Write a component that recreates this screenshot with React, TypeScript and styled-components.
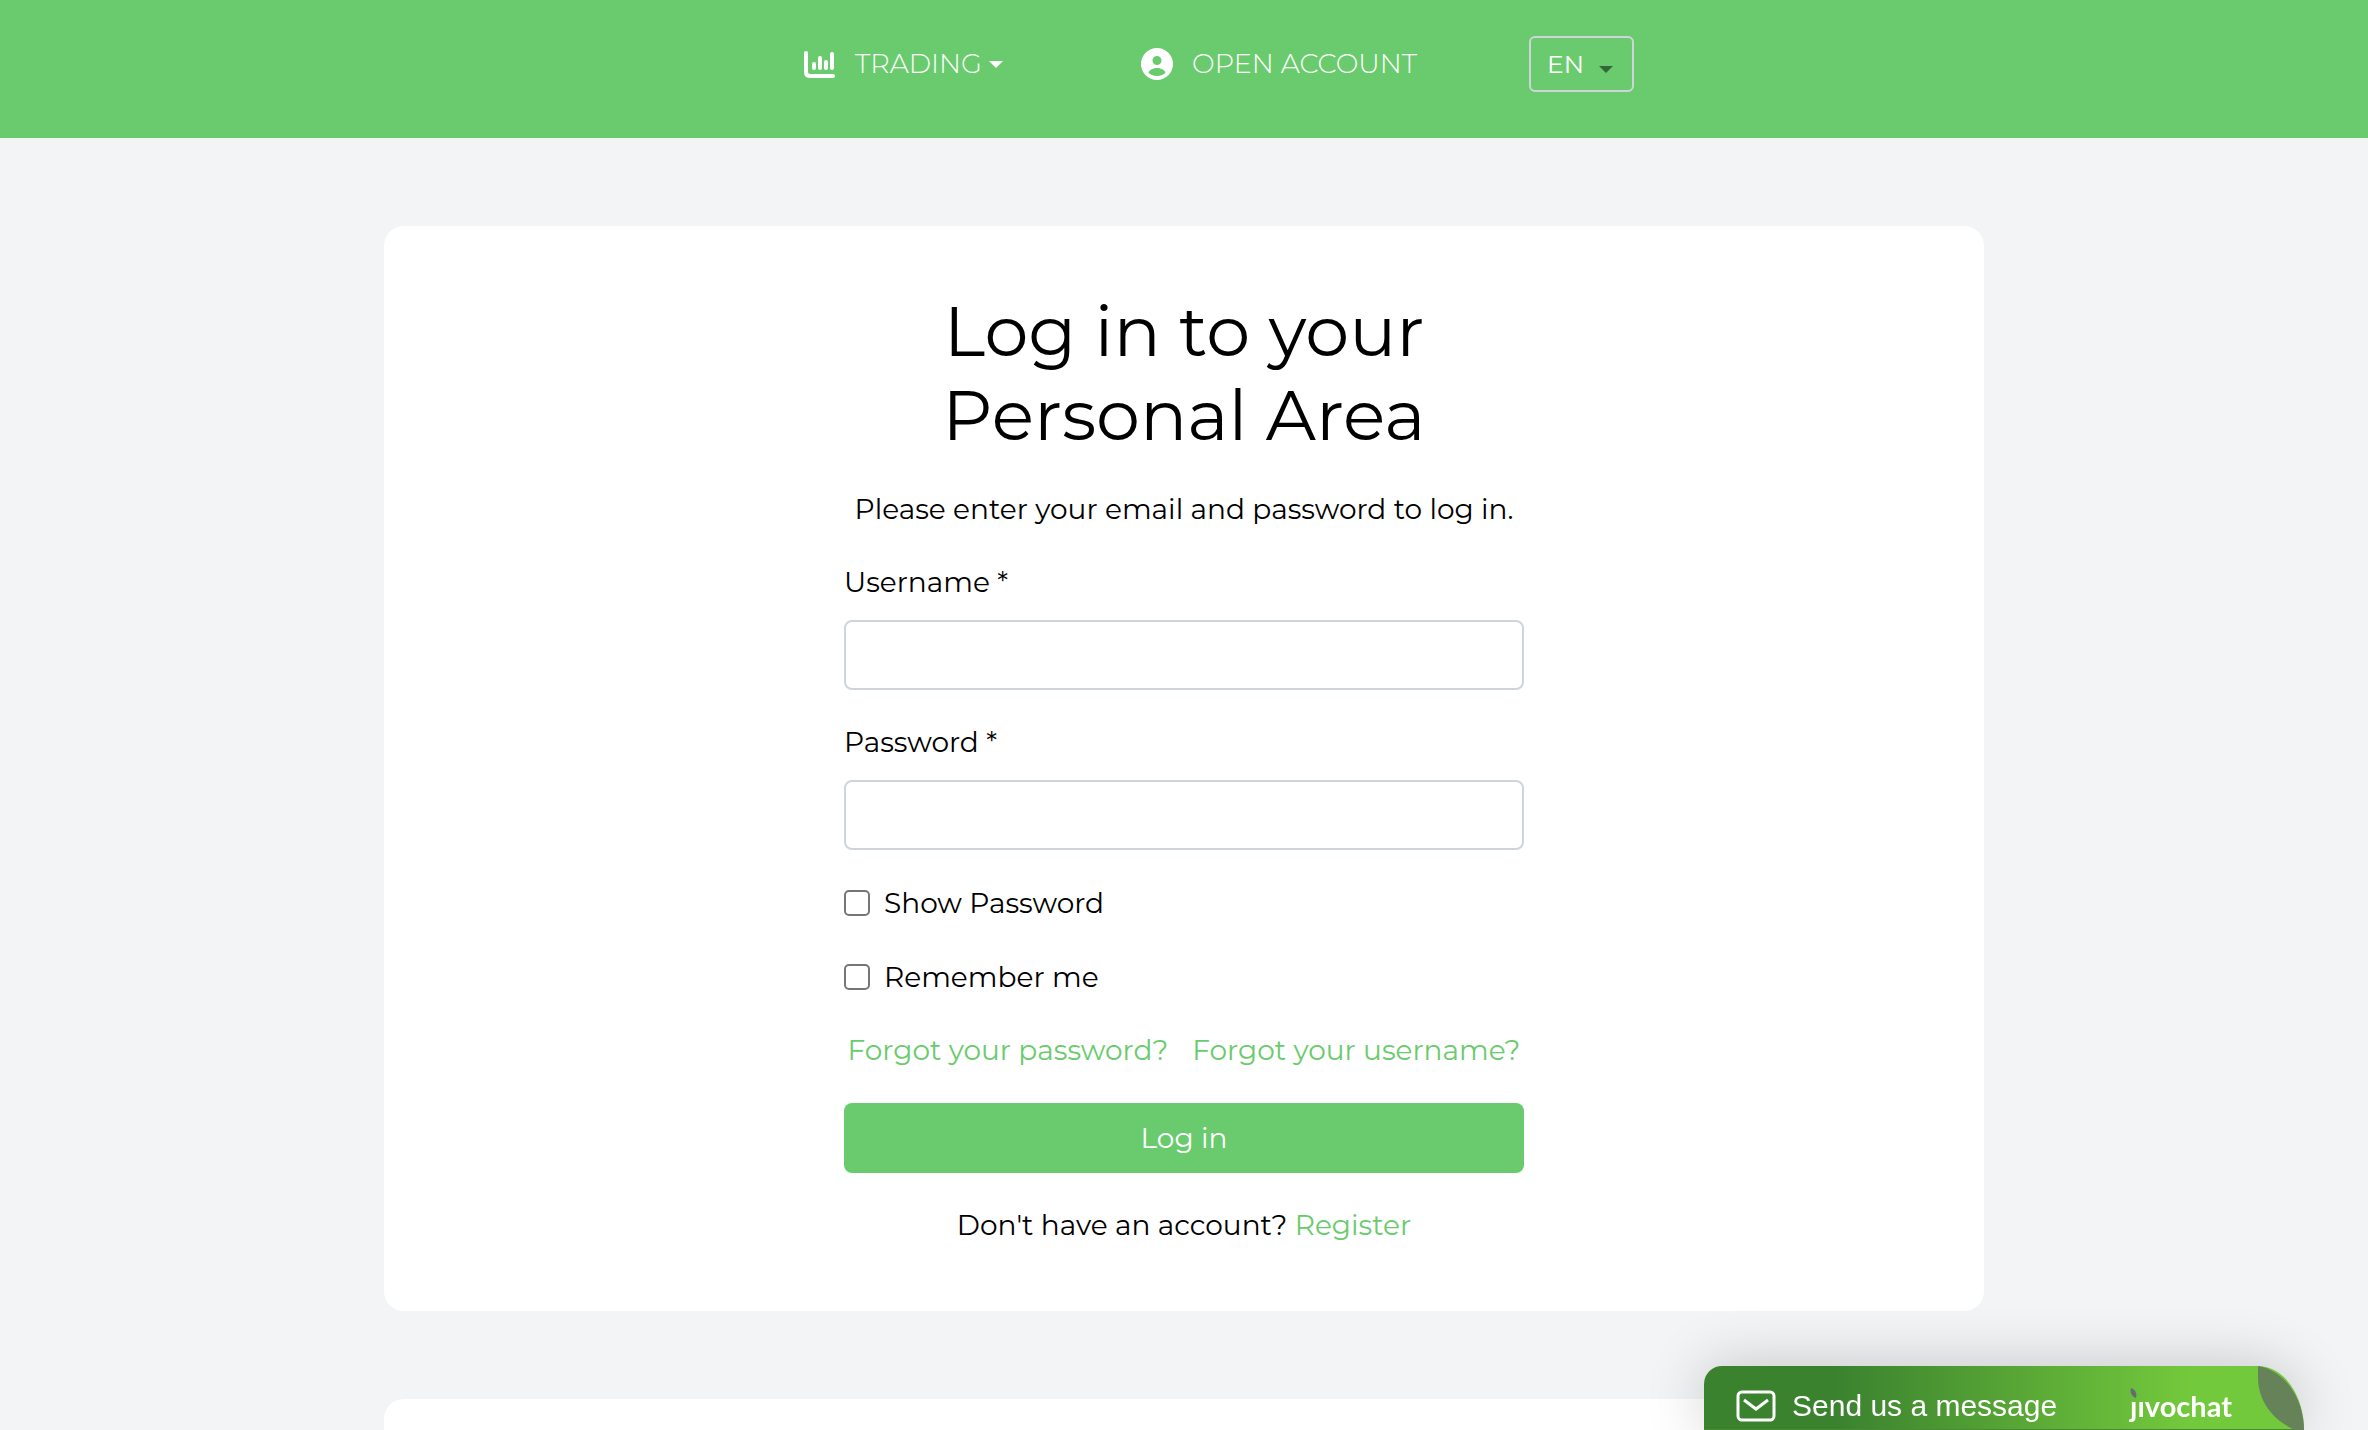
import React, { useState } from "react";
import styled, { createGlobalStyle } from "styled-components";

const green = "#6acb6e";
const sans = 'Montserrat, Inter, "Open Sans", sans-serif';

const GlobalStyle = createGlobalStyle`
  *, *::before, *::after { box-sizing: border-box; }
  body {
    margin: 0;
    background: #f3f4f6;
    color: #000;
    font: 400 28px/42px ${sans};
  }
`;

const Page = styled.div`
  min-height: 100vh;
  display: flex;
  flex-direction: column;
`;

const Header = styled.header`
  display: flex;
  justify-content: center;
  background: ${green};
  padding: 36px 32px 46px;
`;

const Nav = styled.nav`
  display: grid;
  grid-template-columns: 337px 388px 105px;
  align-items: center;
  padding-left: 70px;
`;

const navItem = `
  display: flex;
  align-items: center;
  padding: 0;
  border: 0;
  background: none;
  color: #fff;
  font: 300 27px/56px ${sans};
  text-decoration: none;
  text-transform: uppercase;
  cursor: pointer;
`;

const NavButton = styled.button`${navItem}`;
const NavLink = styled.a`${navItem}`;

const NavIcon = styled.svg`
  width: 32px;
  height: 32px;
  margin-right: 19px;
  fill: #fff;
`;

const Caret = styled.svg`
  width: 14px;
  height: 7px;
  margin-left: 7px;
  fill: #fff;
`;

const LanguageField = styled.div`
  position: relative;
`;

const LanguageSelect = styled.select`
  appearance: none;
  display: block;
  width: 100%;
  height: 56px;
  padding: 0 0 0 16px;
  border: 2px solid #ced4da;
  border-radius: 6px;
  background: transparent;
  color: #fff;
  font: 400 25px/52px ${sans};

  option { color: #000; }
`;

const LanguageCaret = styled.svg`
  position: absolute;
  right: 21px;
  top: 30px;
  width: 14px;
  height: 7px;
  fill: #35663a;
  pointer-events: none;
`;

const Main = styled.main`
  flex: 1;
  display: flex;
  flex-direction: column;
  align-items: center;
  gap: 88px;
  padding-top: 88px;
`;

const Card = styled.section`
  width: 100%;
  max-width: 1600px;
  padding: 63px 32px 65px;
  border-radius: 20px;
  background: #fff;
`;

const NextCard = styled.section`
  flex: 1;
  width: 100%;
  max-width: 1600px;
  border-radius: 20px 20px 0 0;
  background: #fff;
`;

const LoginForm = styled.form`
  display: flex;
  flex-direction: column;
  gap: 31px;
  width: 100%;
  max-width: 680px;
  margin: 0 auto;
`;

const Title = styled.h1`
  margin: 0 auto;
  max-width: 560px;
  font-size: 70px;
  font-weight: 400;
  line-height: 84px;
  text-align: center;
`;

const Centered = styled.p`
  margin: 0;
  text-align: center;
`;

const Field = styled.div`
  display: flex;
  flex-direction: column;
  gap: 17px;
`;

const TextInput = styled.input`
  width: 100%;
  height: 70px;
  padding: 0 22px;
  border: 2px solid #ced4da;
  border-radius: 8px;
  background: #fff;
  font: inherit;
`;

const CheckRow = styled.label`
  display: flex;
  align-items: center;
  gap: 14px;
  min-height: 43px;
`;

const Checkbox = styled.input`
  appearance: none;
  width: 26px;
  height: 26px;
  margin: 0;
  border: 2px solid #767676;
  border-radius: 5px;
  background: #fff;

  &:checked { background: ${green}; }
`;

const LinkRow = styled.div`
  display: flex;
  justify-content: center;
  gap: 24px;
  min-height: 43px;
`;

const TextLink = styled.a`
  color: ${green};
  text-decoration: none;
`;

const SubmitButton = styled.button`
  height: 70px;
  border: 0;
  border-radius: 8px;
  background: ${green};
  color: #fff;
  font: inherit;
  cursor: pointer;
`;

const ChatBar = styled.button`
  position: fixed;
  right: 64px;
  bottom: 0;
  display: flex;
  align-items: center;
  width: 600px;
  height: 64px;
  padding: 16px 72px 0 32px;
  border: 0;
  border-bottom: 1px solid #4b8a35;
  border-radius: 18px 46px 0 0 / 18px 64px 0 0;
  background: linear-gradient(90deg, #3b822f 22%, #73c93c 81%);
  box-shadow: 0 0 60px rgba(0, 0, 0, 0.2);
  color: #fff;
  font: 400 30px/36px "Liberation Sans", Arial, sans-serif;
  cursor: pointer;
`;

const EnvelopeIcon = styled.svg`
  width: 40px;
  height: 32px;
  margin-right: 16px;
  fill: none;
  stroke: #fff;
  stroke-width: 3;
`;

const Brand = styled.span`
  position: relative;
  margin-left: auto;
  font: 700 29px/36px Lato, sans-serif;
`;

const BrandLeaf = styled.svg`
  position: absolute;
  left: 0;
  top: 0;
  width: 7px;
  height: 10px;
  fill: #666a75;
`;

const CornerLeaf = styled.svg`
  position: absolute;
  right: 0;
  top: 0;
  width: 46px;
  height: 64px;
  fill: #668259;
`;

function ChartIcon() {
  return (
    <NavIcon viewBox="0 0 32 32" aria-hidden="true">
      <g fill="none" stroke="#fff" strokeLinecap="round">
        <path d="M2 5v19q0 4 4 4h23" strokeWidth="4" />
        <path d="M10 16v4M16 10v10M22 14v6M28 6v14" strokeWidth="4" />
      </g>
    </NavIcon>
  );
}

function UserIcon() {
  return (
    <NavIcon viewBox="0 0 32 32" aria-hidden="true">
      <path
        fillRule="evenodd"
        d="M16 0a16 16 0 1 1 0 32a16 16 0 0 1 0-32zM16 8a4.500 4.500 0 1 0 0 9a4.500 4.500 0 0 0 0-9zM7.500 24.500C10 29 22 29 24.500 24.500C22 18.500 10 18.500 7.500 24.500z"
      />
    </NavIcon>
  );
}

export default function App() {
  const [showPassword, setShowPassword] = useState(false);

  return (
    <Page>
      <GlobalStyle />
      <Header>
        <Nav>
          <NavButton type="button">
            <ChartIcon />
            Trading
            <Caret viewBox="0 0 14 7" aria-hidden="true">
              <path d="M0 0h14l-7 7z" />
            </Caret>
          </NavButton>
          <NavLink href="#open-account">
            <UserIcon />
            Open account
          </NavLink>
          <LanguageField>
            <LanguageSelect aria-label="Language" defaultValue="EN">
              <option>EN</option>
            </LanguageSelect>
            <LanguageCaret viewBox="0 0 14 7" aria-hidden="true">
              <path d="M0 0h14l-7 7z" />
            </LanguageCaret>
          </LanguageField>
        </Nav>
      </Header>

      <Main>
        <Card>
          <LoginForm onSubmit={(event) => event.preventDefault()}>
            <Title>
              Log in to your
              <br />
              Personal Area
            </Title>
            <Centered>Please enter your email and password to log in.</Centered>
            <Field>
              <label htmlFor="username">Username *</label>
              <TextInput id="username" type="text" />
            </Field>
            <Field>
              <label htmlFor="password">Password *</label>
              <TextInput id="password" type={showPassword ? "text" : "password"} />
            </Field>
            <CheckRow>
              <Checkbox
                type="checkbox"
                checked={showPassword}
                onChange={(event) => setShowPassword(event.target.checked)}
              />
              Show Password
            </CheckRow>
            <CheckRow>
              <Checkbox type="checkbox" />
              Remember me
            </CheckRow>
            <LinkRow>
              <TextLink href="#forgot-password">Forgot your password?</TextLink>
              <TextLink href="#forgot-username">Forgot your username?</TextLink>
            </LinkRow>
            <SubmitButton type="submit">Log in</SubmitButton>
            <Centered>
              Don't have an account? <TextLink href="#register">Register</TextLink>
            </Centered>
          </LoginForm>
        </Card>
        <NextCard />
      </Main>

      <ChatBar type="button">
        <EnvelopeIcon viewBox="0 0 40 32" aria-hidden="true">
          <rect x="2" y="2" width="36" height="28" rx="4" />
          <path d="M8 10l12 9 12-9" />
        </EnvelopeIcon>
        Send us a message
        <Brand>
          ȷıvochat
          <BrandLeaf viewBox="0 0 7 10" aria-hidden="true">
            <path d="M1 0C6 2 7 6 6 10C1 8 0 4 1 0z" />
          </BrandLeaf>
        </Brand>
        <CornerLeaf viewBox="0 0 46 64" aria-hidden="true">
          <path d="M0 0C26 4 46 32 46 64H37C14 54 0 34 0 12z" />
        </CornerLeaf>
      </ChatBar>
    </Page>
  );
}
